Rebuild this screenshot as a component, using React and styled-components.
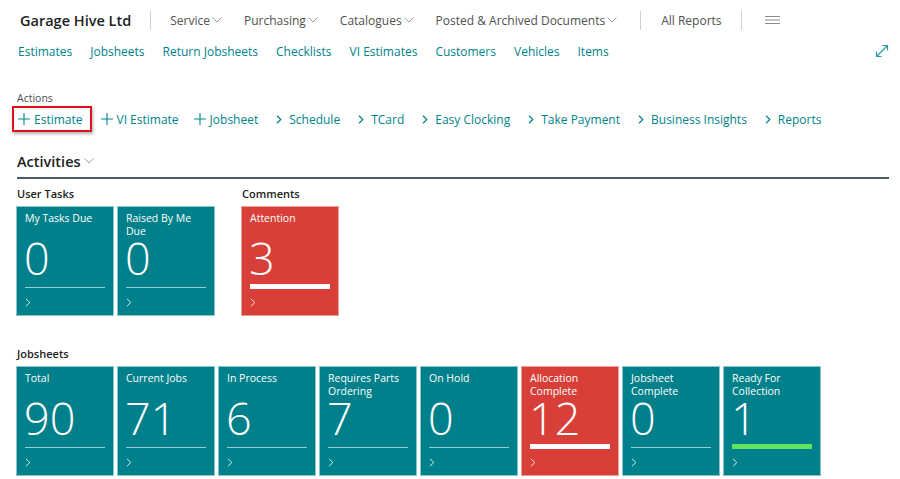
import React from 'react';
import styled, { createGlobalStyle } from 'styled-components';

const GlobalStyle = createGlobalStyle`
  body {
    margin: 0;
    background: #ffffff;
    font-family: 'Open Sans', 'Noto Sans', Arial, sans-serif;
    color: #212121;
  }
`;

const Page = styled.div`
  width: 900px;
  height: 479px;
  overflow: hidden;
  padding: 0 11px 0 17px;
  box-sizing: border-box;
`;

const Header = styled.div`
  display: flex;
  align-items: center;
  height: 40px;
  padding-left: 3px;
`;

const Company = styled.div`
  font-size: 14.5px;
  font-weight: 600;
  color: #212121;
  margin-right: 19px;
`;

const Sep = styled.div`
  width: 1px;
  height: 19px;
  background: #d0d0d0;
  margin: 0 ${(p) => p.right || 19}px 0 0;
`;

const MenuItem = styled.div`
  display: flex;
  align-items: center;
  gap: 2px;
  font-size: 12px;
  color: #505050;
  margin-right: ${(p) => p.gap || 22}px;
`;

const Nav = styled.div`
  display: flex;
  align-items: center;
  height: 22px;
  padding-left: 1px;
`;

const NavLink = styled.a`
  font-size: 12px;
  color: #00838a;
  margin-right: 18px;
  text-decoration: none;
`;

const Expand = styled.div`
  margin-left: auto;
  display: flex;
`;

const ActionsLabel = styled.div`
  margin-top: 29px;
  font-size: 10.5px;
  line-height: 14px;
  color: #505050;
`;

const ActionRow = styled.div`
  display: flex;
  align-items: center;
  height: 26px;
  margin-top: 1px;
  gap: 14px;
`;

const Action = styled.div`
  display: flex;
  align-items: center;
  gap: 3px;
  font-size: 12px;
  color: #00838a;
  height: 26px;
  box-sizing: border-box;
  ${(p) =>
    p.highlight &&
    `
    border: 2px solid #e0101a;
    box-shadow: 1px 2px 3px rgba(0,0,0,0.3);
    margin-left: -5px;
    padding: 0 7px 0 3px;
    margin-right: -6px;
  `}
`;

const IconBox = styled.span`
  width: 14px;
  display: flex;
  justify-content: center;
`;

const SectionHead = styled.div`
  display: flex;
  align-items: center;
  gap: 3px;
  height: 22px;
  margin-top: 18px;
  font-size: 14.5px;
  font-weight: 600;
  color: #212121;
`;

const Divider = styled.div`
  height: 2px;
  background: #505c6d;
  margin-top: 5px;
`;

const Groups = styled.div`
  display: flex;
  gap: 28px;
  margin-top: ${(p) => p.top}px;
`;

const Group = styled.div`
  display: flex;
  flex-direction: column;
`;

const GroupLabel = styled.div`
  font-size: 11px;
  font-weight: 600;
  line-height: 16px;
  color: #212121;
`;

const Tiles = styled.div`
  display: flex;
  gap: 5px;
  margin-top: 5px;
`;

const Tile = styled.div`
  width: 96px;
  height: 108px;
  box-sizing: border-box;
  padding: 5px 8px 0;
  background: ${(p) => (p.red ? '#d83f38' : '#00808a')};
  box-shadow: 0 0 0 1px ${(p) => (p.red ? '#eaa09c' : '#8cc4c8')};
  color: #ffffff;
  display: flex;
  flex-direction: column;
`;

const TileTitle = styled.div`
  height: 26px;
  font-size: 10.5px;
  line-height: 13px;
`;

const TileValue = styled.div`
  height: 40px;
  font-size: 45px;
  font-weight: 300;
  line-height: 40px;
  margin-left: -1px;
`;

const BarSlot = styled.div`
  height: 6px;
  margin-top: 5px;
  display: flex;
  align-items: flex-end;
`;

const Bar = styled.div`
  width: 100%;
  height: ${(p) => (p.thick ? 5 : 1)}px;
  margin-bottom: ${(p) => (p.thick ? 0 : 1)}px;
  background: ${(p) => p.color || 'rgba(255,255,255,0.6)'};
`;

const TileFoot = styled.div`
  margin-top: 9px;
  display: flex;
`;

const Down = () => (
  <svg width="10" height="6" viewBox="0 0 10 6">
    <path d="M0.5 0.5 L5 5 L9.5 0.5" fill="none" stroke="#9a9a9a" strokeWidth="1" />
  </svg>
);

const Plus = () => (
  <svg width="12" height="12" viewBox="0 0 12 12">
    <path d="M6 0 V12 M0 6 H12" stroke="#00838a" strokeWidth="1.1" />
  </svg>
);

const Chevron = ({ color = '#00838a', w = 6, h = 9, sw = 1.2 }) => (
  <svg width={w} height={h} viewBox="0 0 6 9">
    <path d="M1 0.8 L4.8 4.5 L1 8.2" fill="none" stroke={color} strokeWidth={sw} />
  </svg>
);

const tasks = [
  { title: 'My Tasks Due', value: 0 },
  { title: 'Raised By Me Due', value: 0 },
];

const jobs = [
  { title: 'Total', value: 90 },
  { title: 'Current Jobs', value: 71 },
  { title: 'In Process', value: 6 },
  { title: 'Requires Parts Ordering', value: 7 },
  { title: 'On Hold', value: 0 },
  { title: 'Allocation Complete', value: 12, red: true },
  { title: 'Jobsheet Complete', value: 0 },
  { title: 'Ready For Collection', value: 1, bar: '#62e35f' },
];

function Cue({ title, value, red, bar }) {
  return (
    <Tile red={red}>
      <TileTitle>{title}</TileTitle>
      <TileValue>{value}</TileValue>
      <BarSlot>
        {red ? <Bar thick color="#ffffff" /> : bar ? <Bar thick color={bar} /> : <Bar />}
      </BarSlot>
      <TileFoot>
        <Chevron color="rgba(255,255,255,0.85)" w={6} h={9} sw={1} />
      </TileFoot>
    </Tile>
  );
}

const navLinks = ['Estimates', 'Jobsheets', 'Return Jobsheets', 'Checklists', 'VI Estimates', 'Customers', 'Vehicles', 'Items'];

const actions = [
  { label: 'Estimate', plus: true, highlight: true },
  { label: 'VI Estimate', plus: true },
  { label: 'Jobsheet', plus: true },
  { label: 'Schedule' },
  { label: 'TCard' },
  { label: 'Easy Clocking' },
  { label: 'Take Payment' },
  { label: 'Business Insights' },
  { label: 'Reports' },
];

export default function App() {
  return (
    <Page>
      <GlobalStyle />
      <Header>
        <Company>Garage Hive Ltd</Company>
        <Sep />
        <MenuItem>Service<Down /></MenuItem>
        <MenuItem>Purchasing<Down /></MenuItem>
        <MenuItem>Catalogues<Down /></MenuItem>
        <MenuItem gap={23}>Posted &amp; Archived Documents<Down /></MenuItem>
        <Sep right={20} />
        <MenuItem gap={19}>All Reports</MenuItem>
        <Sep right={23} />
        <svg width="15" height="8" viewBox="0 0 15 8">
          <path d="M0 0.5 H15 M0 4 H15 M0 7.5 H15" stroke="#8a8a8a" strokeWidth="1" />
        </svg>
      </Header>
      <Nav>
        {navLinks.map((l) => (
          <NavLink key={l}>{l}</NavLink>
        ))}
        <Expand>
          <svg width="14" height="14" viewBox="0 0 14 14">
            <path d="M1.5 12.5 L12.5 1.5 M7.5 1.5 H12.5 V6.5 M1.5 7.5 V12.5 H6.5" fill="none" stroke="#2a9aa0" strokeWidth="1.2" />
          </svg>
        </Expand>
      </Nav>
      <ActionsLabel>Actions</ActionsLabel>
      <ActionRow>
        {actions.map((a) => (
          <Action key={a.label} highlight={a.highlight}>
            <IconBox>{a.plus ? <Plus /> : <Chevron />}</IconBox>
            {a.label}
          </Action>
        ))}
      </ActionRow>
      <SectionHead>
        Activities
        <Down />
      </SectionHead>
      <Divider />
      <Groups top={7}>
        <Group>
          <GroupLabel>User Tasks</GroupLabel>
          <Tiles>
            {tasks.map((t) => (
              <Cue key={t.title} {...t} />
            ))}
          </Tiles>
        </Group>
        <Group>
          <GroupLabel>Comments</GroupLabel>
          <Tiles>
            <Cue title="Attention" value={3} red />
          </Tiles>
        </Group>
      </Groups>
      <Groups top={31}>
        <Group>
          <GroupLabel>Jobsheets</GroupLabel>
          <Tiles>
            {jobs.map((t) => (
              <Cue key={t.title} {...t} />
            ))}
          </Tiles>
        </Group>
      </Groups>
    </Page>
  );
}
